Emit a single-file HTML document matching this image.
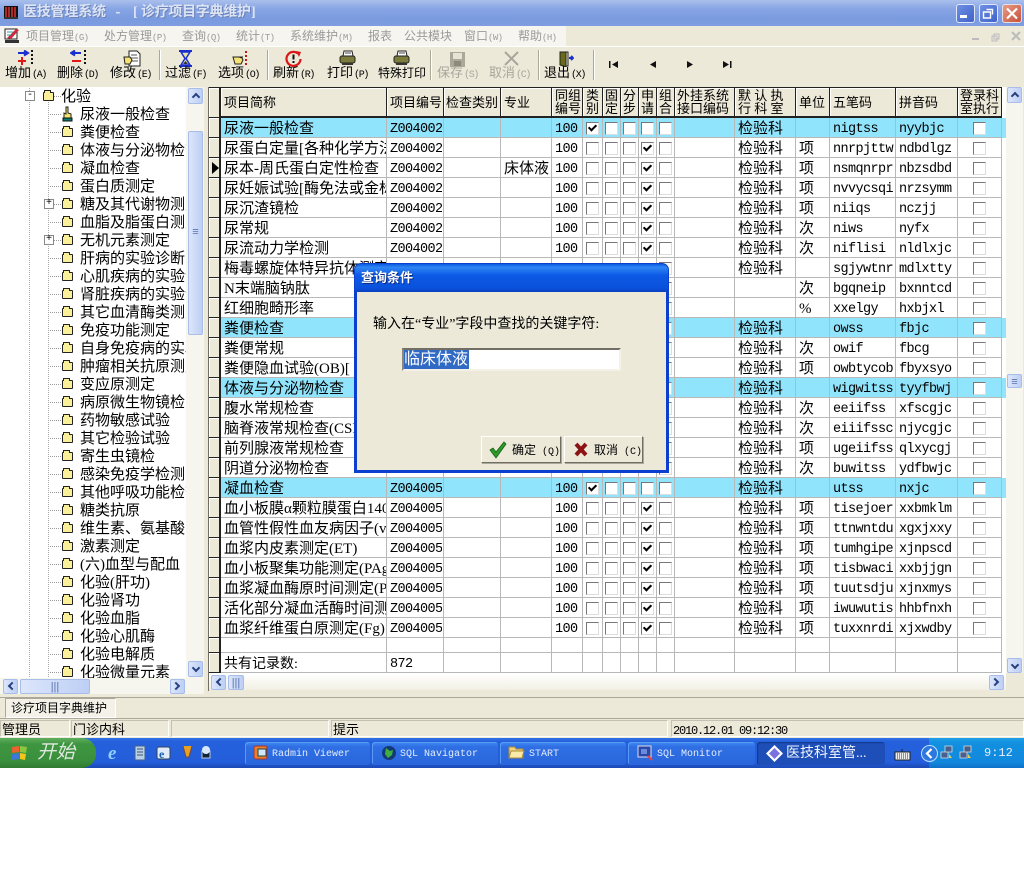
<!DOCTYPE html>
<html lang="zh"><head><meta charset="utf-8"><title>医技管理系统</title>
<style>
html,body{margin:0;padding:0;background:#fff}
#a{position:relative;width:1024px;height:877px;overflow:hidden;background:#fff;font-family:"Liberation Serif","Noto Sans CJK SC",sans-serif;color:#000}
#a div,#a span.p,#a svg{position:absolute}
.m{font-family:"Liberation Mono","Noto Sans CJK SC",monospace}
.l{font-size:13px;line-height:16px;white-space:nowrap;top:65px}
.l small{font-family:"Liberation Mono",monospace;font-size:10px;letter-spacing:-1.3px;margin-left:1px}
.g{color:#a8a69c}
.sep{top:50px;width:1px;height:30px;background:#aca899;border-right:1px solid #fff}
.mn{top:27px;font-size:12px;line-height:19px;color:#9a9a9a;white-space:nowrap}
.mn small{font-family:"Liberation Mono",monospace;font-size:9px;letter-spacing:-.6px}
#t{left:0;top:88px;width:186px;height:590px;overflow:hidden;background:#fff}
.r{position:relative!important;height:18px;line-height:18px;font-size:15px;padding-left:80px;white-space:nowrap}
.r:before{content:"";position:absolute;left:50px;top:8px;width:11px;border-top:1px dotted #999}
.f{position:absolute;left:62px;top:4px;width:9px;height:7px;background:#fbf09a;border:1px solid #222;border-radius:1px}
.f:before{content:"";position:absolute;left:0;top:-3px;width:5px;height:2px;background:#fbf09a;border:1px solid #222;border-bottom:0}
.pb{position:absolute;left:44px;top:3px;width:8px;height:8px;border:1px solid #888;background:#fff;font:10px/8px "Liberation Mono",monospace;text-align:center}
.sb{background:linear-gradient(90deg,#dce6fb,#bdcff5);border:1px solid #a9bdea;border-radius:2px;box-sizing:border-box;color:#5a72ae;font:11px/14px "Liberation Sans",sans-serif;text-align:center}
.sb.u:after,.sb.d:after,.sb.e:after,.sb.w:after{content:"";position:absolute;left:4px;width:4px;height:4px;border:solid #27407e;border-width:2px 0 0 2px}
.sb.u:after{top:5px;transform:rotate(45deg)}
.sb.d:after{top:3px;transform:rotate(225deg)}
.sb.w:after{left:5px;top:3px;transform:rotate(-45deg)}
.sb.e:after{left:2px;top:3px;transform:rotate(135deg)}
table{position:absolute;left:209px;top:87px;width:793px;table-layout:fixed;border-collapse:separate;border-spacing:0;background:#fff}
td{box-sizing:border-box;height:20px;padding:4px 0 0 3px;border-right:1px solid #b8b8b8;border-bottom:1px solid #b8b8b8;overflow:hidden;white-space:nowrap;font-size:15px;line-height:15px;vertical-align:top}
.h td{height:31px;background:#ece9d8;border-right:1px solid #222;border-bottom:2px solid #222;border-top:1px solid #222;font-size:13px;line-height:13px;padding:0 0 0 3px;vertical-align:middle;box-shadow:inset 1px 1px 0 #fff}
td.i,.h td.i{padding:0;background:#ece9d8;border-right:2px solid #222;border-bottom:1px solid #222;box-shadow:inset 1px 1px 0 #fff}
.cy td{background:#90e4fc}
.cy td.i{background:#ece9d8}
td.x{padding:0}
.x b{display:block;position:relative;width:11px;height:11px;margin:4px auto 0;border:1px solid;border-color:#777 #ddd #ddd #777;background:#fff}
.x b.k:after{content:"";position:absolute;left:3px;top:0;width:3px;height:6px;border:solid #000;border-width:0 2px 2px 0;transform:rotate(45deg)}
.z{display:block;width:52px;overflow:hidden}
td.m1{font-family:"Liberation Mono",monospace;font-size:13.5px;letter-spacing:-.6px;padding-left:3px}
.tb{top:742px;height:23px;border-radius:3px;background:linear-gradient(#3f8cf3,#2f6fe3 20%,#2a66dc);color:#e4ecff;font:10px/25px "Liberation Mono",monospace;white-space:nowrap;box-shadow:inset 1px 1px 0 #5a9bf5}
.st{top:720px;height:17px;border:1px solid;border-color:#c4c1b2 #fff #fff #c4c1b2;box-sizing:border-box;font-size:13px;line-height:17px;white-space:nowrap;padding-left:1px;overflow:hidden}
.btn{background:#ece9d8;border:1px solid;border-color:#fff #716f64 #716f64 #fff;box-sizing:border-box;box-shadow:1px 1px 0 #aca899;font-size:12px;line-height:27px;white-space:nowrap}
.btn small{font-family:"Liberation Mono",monospace;font-size:10px}
</style></head><body><div id="a">

<!-- title bar -->
<div style="left:0;top:0;width:1024px;height:26px;background:linear-gradient(#a9bfec,#87a4e4 35%,#7a9ae0 75%,#7f9de0)"></div>
<svg style="left:3px;top:4px" width="16" height="16" viewBox="0 0 16 16"><rect x="1" y="2" width="14" height="13" fill="#111"/><path d="M3 3v10M6 3v10M9 3v10M12 3v10" stroke="#d33" stroke-width="1.5"/><path d="M1 14h14" stroke="#333" stroke-width="2"/></svg>
<div style="left:23px;top:3px;font-size:14px;font-weight:bold;line-height:20px;color:#dce4f4;white-space:nowrap;text-shadow:1px 1px 0 #6a82b8;letter-spacing:-.2px">医技管理系统</div>
<div style="left:114px;top:3px;font:bold 13px/20px 'Liberation Mono',monospace;color:#dce4f4">-</div>
<div style="left:133px;top:3px;font-size:14px;font-weight:bold;line-height:20px;color:#dce4f4">[</div>
<div style="left:141px;top:3px;font-size:14px;font-weight:bold;line-height:20px;color:#dce4f4;white-space:nowrap;text-shadow:1px 1px 0 #6a82b8;letter-spacing:-.3px">诊疗项目字典维护</div>
<div style="left:251px;top:3px;font-size:14px;font-weight:bold;line-height:20px;color:#dce4f4">]</div>
<div style="left:956px;top:4px;width:19px;height:19px;box-sizing:border-box;border:1px solid #dfe7f8;border-radius:3px;background:linear-gradient(135deg,#6f90e4,#3f62c8)"></div>
<div style="left:960px;top:15px;width:7px;height:3px;background:#fff"></div>
<div style="left:979px;top:4px;width:19px;height:19px;box-sizing:border-box;border:1px solid #dfe7f8;border-radius:3px;background:linear-gradient(135deg,#6f90e4,#3f62c8)"></div>
<svg style="left:982px;top:7px" width="13" height="13" viewBox="0 0 13 13"><path d="M4.5 2.5h6v5M1.5 5h7v6h-7z" fill="none" stroke="#fff" stroke-width="1.4"/></svg>
<div style="left:1002px;top:4px;width:20px;height:19px;box-sizing:border-box;border:1px solid #e8e0e0;border-radius:3px;background:linear-gradient(135deg,#e89a86,#c8523a)"></div>
<svg style="left:1005px;top:7px" width="14" height="13" viewBox="0 0 14 13"><path d="M2 1.5l10 10M12 1.5l-10 10" stroke="#fff" stroke-width="2.2"/></svg>

<!-- menu -->
<div style="left:0;top:26px;width:1024px;height:21px;background:#ece9d8"></div>
<div style="left:0;top:26px;width:566px;height:20px;background:#f6f5ef"></div>
<div style="left:0;top:46px;width:1024px;height:1px;background:#fff"></div>
<svg style="left:4px;top:27px" width="17" height="18" viewBox="0 0 17 18"><rect x="1" y="2" width="12" height="10" fill="#fff" stroke="#222"/><path d="M3 11l9-9 3 1-8 9z" fill="#d02a3a"/><path d="M1 13h14v3H1z" fill="#333"/><path d="M3 5h6M3 8h4" stroke="#39a" /></svg>
<div class="mn" style="left:26px">项目管理<small>(G)</small></div>
<div class="mn" style="left:104px">处方管理<small>(P)</small></div>
<div class="mn" style="left:182px">查询<small>(Q)</small></div>
<div class="mn" style="left:236px">统计<small>(T)</small></div>
<div class="mn" style="left:290px">系统维护<small>(M)</small></div>
<div class="mn" style="left:368px">报表</div>
<div class="mn" style="left:404px">公共模块</div>
<div class="mn" style="left:464px">窗口<small>(W)</small></div>
<div class="mn" style="left:518px">帮助<small>(H)</small></div>
<svg style="left:970px;top:28px" width="54" height="16" viewBox="0 0 54 16"><path d="M2 11h7" stroke="#bbb" stroke-width="2"/><path d="M24 6h5v5h-5zM22 8h5v5h-5z" fill="none" stroke="#bbb"/><path d="M42 4l8 8M50 4l-8 8" stroke="#bbb" stroke-width="2"/></svg>

<!-- toolbar -->
<div style="left:0;top:47px;width:1024px;height:37px;background:#ece9d8;border-bottom:1px solid #aca899"></div>
<svg style="left:17px;top:50px" width="20" height="16" viewBox="0 0 20 16"><path d="M1 3h9M7 0.500l4 2.500-4 2.500" stroke="#1a2fd0" stroke-width="2" fill="#1a2fd0"/><path d="M1 11h8M5 7v8" stroke="#e01818" stroke-width="2"/><path d="M15 0v16" stroke="#111" stroke-width="2" stroke-dasharray="2 2"/></svg>
<svg style="left:70px;top:50px" width="20" height="16" viewBox="0 0 20 16"><path d="M11 3H2M5 0.500L1 3l4 2.500" stroke="#1a2fd0" stroke-width="2" fill="#1a2fd0"/><path d="M2 11h9" stroke="#e01818" stroke-width="2"/><path d="M15 0v16" stroke="#111" stroke-width="2" stroke-dasharray="2 2"/></svg>
<svg style="left:123px;top:50px" width="18" height="17" viewBox="0 0 18 17"><path d="M6 1h8l3 3v12H6z" fill="#fff" stroke="#222"/><path d="M8 5h6M8 8h7M8 11h7" stroke="#555"/><path d="M1 7h6l2 3-2 4H2z" fill="#f5e272" stroke="#222"/></svg>
<svg style="left:177px;top:50px" width="17" height="17" viewBox="0 0 17 17"><path d="M2 1h13M2 16h13" stroke="#1a2fd0" stroke-width="2"/><path d="M4 2h9L9 8.500l4 6.500H4l4-6.500z" fill="#e6e2a8" stroke="#1a2fd0" stroke-width="1.500"/><path d="M6 14h5l-2.500-3z" fill="#333"/></svg>
<svg style="left:232px;top:51px" width="16" height="15" viewBox="0 0 16 15"><path d="M1 6h6l3 1 1 2-2 4H3z" fill="#f5e272" stroke="#222"/><path d="M14 0v15" stroke="#c01818" stroke-width="2" stroke-dasharray="2 2"/><path d="M7 6h4" stroke="#222"/></svg>
<svg style="left:285px;top:50px" width="17" height="17" viewBox="0 0 17 17"><path d="M13 3.500A7 7 0 1 0 15.500 9" fill="none" stroke="#d81818" stroke-width="2.200"/><path d="M11 1l5 1-2 5z" fill="#d81818"/><path d="M8.500 4.500v5M8.500 11v2" stroke="#111" stroke-width="2"/></svg>
<svg style="left:339px;top:50px" width="17" height="16" viewBox="0 0 17 16"><path d="M5 1h8l1 5H4z" fill="#fff" stroke="#222"/><rect x="1" y="6" width="15" height="7" rx="2" fill="#7c7c3c" stroke="#222"/><path d="M3 13h11v2H3z" fill="#333"/><path d="M6 3h6" stroke="#444"/></svg>
<svg style="left:393px;top:50px" width="17" height="16" viewBox="0 0 17 16"><path d="M5 1h8l1 5H4z" fill="#fff" stroke="#222"/><rect x="1" y="6" width="15" height="7" rx="2" fill="#7c7c3c" stroke="#222"/><path d="M3 13h11v2H3z" fill="#333"/><path d="M6 3h6" stroke="#444"/></svg>
<svg style="left:450px;top:52px" width="16" height="15" viewBox="0 0 16 15"><rect width="15" height="15" fill="#aca899"/><rect x="3" y="1" width="9" height="6" fill="#e6e3d4"/><rect x="4" y="9" width="7" height="5" fill="#8d8a7c"/></svg>
<svg style="left:504px;top:51px" width="15" height="15" viewBox="0 0 15 15"><path d="M1 1l13 13M14 1L1 14" stroke="#a8a69c" stroke-width="2"/></svg>
<svg style="left:559px;top:51px" width="15" height="16" viewBox="0 0 15 16"><path d="M1 1h6v15l-6-2z" fill="#6a6a18" stroke="#222"/><path d="M7 1h2v14H7" fill="none" stroke="#222"/><path d="M10 7h3M12 5l2 2-2 2" stroke="#1a2fd0" stroke-width="2"/></svg>

<div class="l" style="left:5px">增加<small>(A)</small></div>
<div class="l" style="left:57px">删除<small>(D)</small></div>
<div class="l" style="left:110px">修改<small>(E)</small></div>
<div class="sep" style="left:159px"></div>
<div class="l" style="left:165px">过滤<small>(F)</small></div>
<div class="l" style="left:218px">选项<small>(O)</small></div>
<div class="sep" style="left:267px"></div>
<div class="l" style="left:273px">刷新<small>(R)</small></div>
<div class="l" style="left:327px">打印<small>(P)</small></div>
<div class="l" style="left:378px;font-size:12px">特殊打印</div>
<div class="sep" style="left:430px"></div>
<div class="l g" style="left:437px">保存<small>(S)</small></div>
<div class="l g" style="left:489px">取消<small>(C)</small></div>
<div class="sep" style="left:538px"></div>
<div class="l" style="left:544px">退出<small>(X)</small></div>
<div class="sep" style="left:593px"></div>
<svg style="left:608px;top:60px" width="126" height="10" viewBox="0 0 126 10"><path d="M1 1v7h1.500V1zM10 1v7L4 4.500z" fill="#111"/><path d="M48 1v7l-6-3.500z" fill="#111"/><path d="M79 1v7l6-3.500z" fill="#111"/><path d="M115 1v7l6-3.500zM122 1v7h1.500V1z" fill="#111"/></svg>

<!-- main background -->
<div style="left:0;top:84px;width:1024px;height:613px;background:#ece9d8"></div>

<!-- tree -->
<div style="left:0;top:87px;width:186px;height:1px;background:#fff"></div>
<div id="t">
<div style="left:29px;top:0;height:591px;border-left:1px dotted #aaa"></div>
<div style="left:48px;top:9px;height:582px;border-left:1px dotted #aaa"></div>
<div class="r" style="padding-left:61px"><i class="pb" style="left:25px">-</i><i class="f" style="left:43px"></i>化验</div>
<div class="r"><svg style="left:62px;top:0" width="11" height="16" viewBox="0 0 11 16"><path d="M4 1h2v6l3 1v4H2V7l2 1z" fill="#f6e46c" stroke="#222"/><rect x="1" y="12" width="9" height="3" fill="#0a7a70" stroke="#111"/></svg>尿液一般检查</div>
<div class="r"><i class="f"></i>粪便检查</div>
<div class="r"><i class="f"></i>体液与分泌物检查</div>
<div class="r"><i class="f"></i>凝血检查</div>
<div class="r"><i class="f"></i>蛋白质测定</div>
<div class="r"><i class="pb">+</i><i class="f"></i>糖及其代谢物测定</div>
<div class="r"><i class="f"></i>血脂及脂蛋白测定</div>
<div class="r"><i class="pb">+</i><i class="f"></i>无机元素测定</div>
<div class="r"><i class="f"></i>肝病的实验诊断</div>
<div class="r"><i class="f"></i>心肌疾病的实验诊断</div>
<div class="r"><i class="f"></i>肾脏疾病的实验诊断</div>
<div class="r"><i class="f"></i>其它血清酶类测定</div>
<div class="r"><i class="f"></i>免疫功能测定</div>
<div class="r"><i class="f"></i>自身免疫病的实验</div>
<div class="r"><i class="f"></i>肿瘤相关抗原测定</div>
<div class="r"><i class="f"></i>变应原测定</div>
<div class="r"><i class="f"></i>病原微生物镜检</div>
<div class="r"><i class="f"></i>药物敏感试验</div>
<div class="r"><i class="f"></i>其它检验试验</div>
<div class="r"><i class="f"></i>寄生虫镜检</div>
<div class="r"><i class="f"></i>感染免疫学检测</div>
<div class="r"><i class="f"></i>其他呼吸功能检查</div>
<div class="r"><i class="f"></i>糖类抗原</div>
<div class="r"><i class="f"></i>维生素、氨基酸</div>
<div class="r"><i class="f"></i>激素测定</div>
<div class="r"><i class="f"></i>(六)血型与配血</div>
<div class="r"><i class="f"></i>化验(肝功)</div>
<div class="r"><i class="f"></i>化验肾功</div>
<div class="r"><i class="f"></i>化验血脂</div>
<div class="r"><i class="f"></i>化验心肌酶</div>
<div class="r"><i class="f"></i>化验电解质</div>
<div class="r"><i class="f"></i>化验微量元素</div>
</div>
<div style="left:186px;top:87px;width:18px;height:591px;background:#f6f5ee"></div>
<div class="sb u" style="left:188px;top:88px;width:15px;height:16px"></div>
<div class="sb" style="left:188px;top:131px;width:15px;height:204px;line-height:200px">≡</div>
<div class="sb d" style="left:188px;top:661px;width:15px;height:16px"></div>
<div style="left:0;top:678px;width:204px;height:16px;background:#f6f5ee"></div>
<div class="sb w" style="left:3px;top:679px;width:15px;height:15px"></div>
<div class="sb" style="left:20px;top:679px;width:70px;height:15px">|||</div>
<div class="sb e" style="left:170px;top:679px;width:15px;height:15px"></div>

<!-- grid -->
<table>
<colgroup><col style="width:12px"><col style="width:166px"><col style="width:57px"><col style="width:57px"><col style="width:51px"><col style="width:31px"><col style="width:20px"><col style="width:18px"><col style="width:18px"><col style="width:18px"><col style="width:18px"><col style="width:60px"><col style="width:61px"><col style="width:34px"><col style="width:66px"><col style="width:62px"><col style="width:44px"></colgroup>
<tr class="h"><td class="i"></td><td>项目简称</td><td>项目编号</td><td style="padding-left:2px">检查类别</td><td>专业</td><td>同组<br>编号</td><td style="padding-left:3px">类<br>别</td><td style="padding-left:2px">固<br>定</td><td style="padding-left:2px">分<br>步</td><td style="padding-left:2px">申<br>请</td><td style="padding-left:2px">组<br>合</td><td style="padding-left:2px">外挂系统<br>接口编码</td><td>默 认 执<br>行 科 室</td><td>单位</td><td>五笔码</td><td>拼音码</td><td style="padding-left:2px">登录科<br>室执行</td></tr>
<tr class="cy"><td class="i"></td><td>尿液一般检查</td><td class="m1"><span class="z">Z004002</span></td><td></td><td></td><td class="m1">100</td><td class="x"><b class="k"></b></td><td class="x"><b></b></td><td class="x"><b></b></td><td class="x"><b></b></td><td class="x"><b></b></td><td></td><td>检验科</td><td></td><td class="m1">nigtss</td><td class="m1">nyybjc</td><td class="x"><b></b></td></tr>
<tr><td class="i"></td><td>尿蛋白定量[各种化学方法]</td><td class="m1"><span class="z">Z004002</span></td><td></td><td></td><td class="m1">100</td><td class="x"><b></b></td><td class="x"><b></b></td><td class="x"><b></b></td><td class="x"><b class="k"></b></td><td class="x"><b></b></td><td></td><td>检验科</td><td>项</td><td class="m1">nnrpjttw</td><td class="m1">ndbdlgz</td><td class="x"><b></b></td></tr>
<tr><td class="i"><svg style="position:static;display:block;margin:4px 0 0 3px" width="7" height="12" viewBox="0 0 7 12"><path d="M0 0v12l7-6z" fill="#000"/></svg></td><td>尿本-周氏蛋白定性检查</td><td class="m1"><span class="z">Z004002</span></td><td></td><td>床体液</td><td class="m1">100</td><td class="x"><b></b></td><td class="x"><b></b></td><td class="x"><b></b></td><td class="x"><b class="k"></b></td><td class="x"><b></b></td><td></td><td>检验科</td><td>项</td><td class="m1">nsmqnrpr</td><td class="m1">nbzsdbd</td><td class="x"><b></b></td></tr>
<tr><td class="i"></td><td>尿妊娠试验[酶免法或金标法]</td><td class="m1"><span class="z">Z004002</span></td><td></td><td></td><td class="m1">100</td><td class="x"><b></b></td><td class="x"><b></b></td><td class="x"><b></b></td><td class="x"><b class="k"></b></td><td class="x"><b></b></td><td></td><td>检验科</td><td>项</td><td class="m1">nvvycsqi</td><td class="m1">nrzsymm</td><td class="x"><b></b></td></tr>
<tr><td class="i"></td><td>尿沉渣镜检</td><td class="m1"><span class="z">Z004002</span></td><td></td><td></td><td class="m1">100</td><td class="x"><b></b></td><td class="x"><b></b></td><td class="x"><b></b></td><td class="x"><b class="k"></b></td><td class="x"><b></b></td><td></td><td>检验科</td><td>项</td><td class="m1">niiqs</td><td class="m1">nczjj</td><td class="x"><b></b></td></tr>
<tr><td class="i"></td><td>尿常规</td><td class="m1"><span class="z">Z004002</span></td><td></td><td></td><td class="m1">100</td><td class="x"><b></b></td><td class="x"><b></b></td><td class="x"><b></b></td><td class="x"><b class="k"></b></td><td class="x"><b></b></td><td></td><td>检验科</td><td>次</td><td class="m1">niws</td><td class="m1">nyfx</td><td class="x"><b></b></td></tr>
<tr><td class="i"></td><td>尿流动力学检测</td><td class="m1"><span class="z">Z004002</span></td><td></td><td></td><td class="m1">100</td><td class="x"><b></b></td><td class="x"><b></b></td><td class="x"><b></b></td><td class="x"><b class="k"></b></td><td class="x"><b></b></td><td></td><td>检验科</td><td>次</td><td class="m1">niflisi</td><td class="m1">nldlxjc</td><td class="x"><b></b></td></tr>
<tr><td class="i"></td><td>梅毒螺旋体特异抗体测定</td><td></td><td></td><td></td><td></td><td class="x"></td><td class="x"></td><td class="x"></td><td class="x"></td><td class="x"><b></b></td><td></td><td>检验科</td><td></td><td class="m1">sgjywtnr</td><td class="m1">mdlxtty</td><td class="x"><b></b></td></tr>
<tr><td class="i"></td><td>N末端脑钠肽</td><td></td><td></td><td></td><td></td><td class="x"></td><td class="x"></td><td class="x"></td><td class="x"></td><td class="x"><b></b></td><td></td><td></td><td>次</td><td class="m1">bgqneip</td><td class="m1">bxnntcd</td><td class="x"><b></b></td></tr>
<tr><td class="i"></td><td>红细胞畸形率</td><td></td><td></td><td></td><td></td><td class="x"></td><td class="x"></td><td class="x"></td><td class="x"></td><td class="x"><b></b></td><td></td><td></td><td>%</td><td class="m1">xxelgy</td><td class="m1">hxbjxl</td><td class="x"><b></b></td></tr>
<tr class="cy"><td class="i"></td><td>粪便检查</td><td></td><td></td><td></td><td></td><td class="x"></td><td class="x"></td><td class="x"></td><td class="x"></td><td class="x"><b></b></td><td></td><td>检验科</td><td></td><td class="m1">owss</td><td class="m1">fbjc</td><td class="x"><b></b></td></tr>
<tr><td class="i"></td><td>粪便常规</td><td></td><td></td><td></td><td></td><td class="x"></td><td class="x"></td><td class="x"></td><td class="x"></td><td class="x"><b></b></td><td></td><td>检验科</td><td>次</td><td class="m1">owif</td><td class="m1">fbcg</td><td class="x"><b></b></td></tr>
<tr><td class="i"></td><td>粪便隐血试验(OB)[</td><td></td><td></td><td></td><td></td><td class="x"></td><td class="x"></td><td class="x"></td><td class="x"></td><td class="x"><b></b></td><td></td><td>检验科</td><td>项</td><td class="m1">owbtycob</td><td class="m1">fbyxsyo</td><td class="x"><b></b></td></tr>
<tr class="cy"><td class="i"></td><td>体液与分泌物检查</td><td></td><td></td><td></td><td></td><td class="x"></td><td class="x"></td><td class="x"></td><td class="x"></td><td class="x"><b></b></td><td></td><td>检验科</td><td></td><td class="m1">wigwitss</td><td class="m1">tyyfbwj</td><td class="x"><b></b></td></tr>
<tr><td class="i"></td><td>腹水常规检查</td><td></td><td></td><td></td><td></td><td class="x"></td><td class="x"></td><td class="x"></td><td class="x"></td><td class="x"><b></b></td><td></td><td>检验科</td><td>次</td><td class="m1">eeiifss</td><td class="m1">xfscgjc</td><td class="x"><b></b></td></tr>
<tr><td class="i"></td><td>脑脊液常规检查(CSF)</td><td></td><td></td><td></td><td></td><td class="x"></td><td class="x"></td><td class="x"></td><td class="x"></td><td class="x"><b></b></td><td></td><td>检验科</td><td>次</td><td class="m1">eiiifssc</td><td class="m1">njycgjc</td><td class="x"><b></b></td></tr>
<tr><td class="i"></td><td>前列腺液常规检查</td><td></td><td></td><td></td><td></td><td class="x"></td><td class="x"></td><td class="x"></td><td class="x"></td><td class="x"><b></b></td><td></td><td>检验科</td><td>项</td><td class="m1">ugeiifss</td><td class="m1">qlxycgj</td><td class="x"><b></b></td></tr>
<tr><td class="i"></td><td>阴道分泌物检查</td><td></td><td></td><td></td><td></td><td class="x"></td><td class="x"></td><td class="x"></td><td class="x"></td><td class="x"><b></b></td><td></td><td>检验科</td><td>次</td><td class="m1">buwitss</td><td class="m1">ydfbwjc</td><td class="x"><b></b></td></tr>
<tr class="cy"><td class="i"></td><td>凝血检查</td><td class="m1"><span class="z">Z004005</span></td><td></td><td></td><td class="m1">100</td><td class="x"><b class="k"></b></td><td class="x"><b></b></td><td class="x"><b></b></td><td class="x"><b></b></td><td class="x"><b></b></td><td></td><td>检验科</td><td></td><td class="m1">utss</td><td class="m1">nxjc</td><td class="x"><b></b></td></tr>
<tr><td class="i"></td><td>血小板膜α颗粒膜蛋白140</td><td class="m1"><span class="z">Z004005</span></td><td></td><td></td><td class="m1">100</td><td class="x"><b></b></td><td class="x"><b></b></td><td class="x"><b></b></td><td class="x"><b class="k"></b></td><td class="x"><b></b></td><td></td><td>检验科</td><td>项</td><td class="m1">tisejoer</td><td class="m1">xxbmklm</td><td class="x"><b></b></td></tr>
<tr><td class="i"></td><td>血管性假性血友病因子(vWF)</td><td class="m1"><span class="z">Z004005</span></td><td></td><td></td><td class="m1">100</td><td class="x"><b></b></td><td class="x"><b></b></td><td class="x"><b></b></td><td class="x"><b class="k"></b></td><td class="x"><b></b></td><td></td><td>检验科</td><td>项</td><td class="m1">ttnwntdu</td><td class="m1">xgxjxxy</td><td class="x"><b></b></td></tr>
<tr><td class="i"></td><td>血浆内皮素测定(ET)</td><td class="m1"><span class="z">Z004005</span></td><td></td><td></td><td class="m1">100</td><td class="x"><b></b></td><td class="x"><b></b></td><td class="x"><b></b></td><td class="x"><b class="k"></b></td><td class="x"><b></b></td><td></td><td>检验科</td><td>项</td><td class="m1">tumhgipe</td><td class="m1">xjnpscd</td><td class="x"><b></b></td></tr>
<tr><td class="i"></td><td>血小板聚集功能测定(PAgT)</td><td class="m1"><span class="z">Z004005</span></td><td></td><td></td><td class="m1">100</td><td class="x"><b></b></td><td class="x"><b></b></td><td class="x"><b></b></td><td class="x"><b class="k"></b></td><td class="x"><b></b></td><td></td><td>检验科</td><td>项</td><td class="m1">tisbwaci</td><td class="m1">xxbjjgn</td><td class="x"><b></b></td></tr>
<tr><td class="i"></td><td>血浆凝血酶原时间测定(PT)</td><td class="m1"><span class="z">Z004005</span></td><td></td><td></td><td class="m1">100</td><td class="x"><b></b></td><td class="x"><b></b></td><td class="x"><b></b></td><td class="x"><b class="k"></b></td><td class="x"><b></b></td><td></td><td>检验科</td><td>项</td><td class="m1">tuutsdju</td><td class="m1">xjnxmys</td><td class="x"><b></b></td></tr>
<tr><td class="i"></td><td>活化部分凝血活酶时间测定</td><td class="m1"><span class="z">Z004005</span></td><td></td><td></td><td class="m1">100</td><td class="x"><b></b></td><td class="x"><b></b></td><td class="x"><b></b></td><td class="x"><b class="k"></b></td><td class="x"><b></b></td><td></td><td>检验科</td><td>项</td><td class="m1">iwuwutis</td><td class="m1">hhbfnxh</td><td class="x"><b></b></td></tr>
<tr><td class="i"></td><td>血浆纤维蛋白原测定(Fg)</td><td class="m1"><span class="z">Z004005</span></td><td></td><td></td><td class="m1">100</td><td class="x"><b></b></td><td class="x"><b></b></td><td class="x"><b></b></td><td class="x"><b class="k"></b></td><td class="x"><b></b></td><td></td><td>检验科</td><td>项</td><td class="m1">tuxxnrdi</td><td class="m1">xjxwdby</td><td class="x"><b></b></td></tr>
<tr><td class="i" style="height:15px"></td><td style="height:15px"></td><td style="height:15px"></td><td style="height:15px"></td><td style="height:15px"></td><td style="height:15px"></td><td style="height:15px"></td><td style="height:15px"></td><td style="height:15px"></td><td style="height:15px"></td><td style="height:15px"></td><td style="height:15px"></td><td style="height:15px"></td><td style="height:15px"></td><td style="height:15px"></td><td style="height:15px"></td><td style="height:15px"></td></tr>
<tr><td class="i"></td><td style="font-size:14px">共有记录数:</td><td class="m1">872</td><td></td><td></td><td></td><td></td><td></td><td></td><td></td><td></td><td></td><td></td><td></td><td></td><td></td><td></td></tr>
</table>
<div style="left:208px;top:87px;width:1px;height:604px;background:#716f64"></div>
<div style="left:1002px;top:87px;width:4px;height:586px;background:#fff"></div>
<div style="left:1002px;top:118px;width:4px;height:20px;background:#90e4fc"></div>
<div style="left:1002px;top:318px;width:4px;height:20px;background:#90e4fc"></div>
<div style="left:1002px;top:378px;width:4px;height:20px;background:#90e4fc"></div>
<div style="left:1002px;top:478px;width:4px;height:20px;background:#90e4fc"></div>
<div style="left:1006px;top:87px;width:17px;height:586px;background:#f6f5ee"></div>
<div class="sb u" style="left:1007px;top:87px;width:15px;height:16px"></div>
<div class="sb" style="left:1007px;top:374px;width:15px;height:14px">≡</div>
<div class="sb d" style="left:1007px;top:658px;width:15px;height:15px"></div>
<div style="left:209px;top:673px;width:797px;height:17px;background:linear-gradient(#fff,#f2f0e4)"></div>
<div class="sb w" style="left:211px;top:675px;width:15px;height:15px"></div>
<div class="sb" style="left:228px;top:675px;width:16px;height:15px">|||</div>
<div class="sb e" style="left:989px;top:675px;width:15px;height:15px"></div>

<!-- tab bar -->
<div style="left:0;top:697px;width:1024px;height:1px;background:#aca899"></div>
<div style="left:0;top:698px;width:1024px;height:40px;background:#ece9d8"></div>
<div style="left:0;top:718px;width:1024px;height:1px;background:#aca899"></div>
<div style="left:5px;top:698px;width:111px;height:20px;box-sizing:border-box;border:1px solid;border-color:#aca899 #fff #fff #aca899;background:#f4f2e8;font-size:12px;line-height:18px;padding-left:5px;white-space:nowrap">诊疗项目字典维护</div>

<!-- status -->
<div class="st" style="left:0;width:70px">管理员</div>
<div class="st" style="left:71px;width:98px">门诊内科</div>
<div class="st" style="left:171px;width:158px"></div>
<div class="st" style="left:331px;width:337px">提示</div>
<div class="st" style="left:671px;width:353px"><span class="m" style="font-size:12px;letter-spacing:-1.2px">2010.12.01 09:12:30</span></div>

<!-- taskbar -->
<div style="left:0;top:738px;width:1024px;height:30px;background:linear-gradient(#2f72e6,#2560dc 12%,#245edb 80%,#1c48b4)"></div>
<div style="left:0;top:738px;width:96px;height:30px;border-radius:0 14px 14px 0;background:linear-gradient(#5fae5f,#3f9640 20%,#3a8f3c 75%,#2f7a30)"></div>
<svg style="left:11px;top:745px" width="18" height="16" viewBox="0 0 18 16"><path d="M1 2l7-1v6l-7 1z" fill="#e8642c"/><path d="M9 1l7 1-1 6-6-1z" fill="#8cc63f"/><path d="M1 9l7-1v6l-7 1z" fill="#3c78d8"/><path d="M9 8l6 1-1 6-5-1z" fill="#f5c518"/></svg>
<div style="left:37px;top:740px;font-size:19px;font-style:italic;line-height:26px;color:#dfe8df;white-space:nowrap">开始</div>
<svg style="left:108px;top:744px" width="110" height="18" viewBox="0 0 110 18"><text x="0" y="15" font-family="Liberation Serif,serif" font-style="italic" font-weight="bold" font-size="19" fill="#8fd0ff">e</text><rect x="27" y="2" width="10" height="14" fill="#b8cfe8" stroke="#44618f"/><path d="M29 5h6M29 8h6M29 11h6" stroke="#456"/><rect x="49" y="3" width="13" height="12" rx="2" fill="#dfeaff" stroke="#345"/><text x="51" y="14" font-family="Liberation Serif,serif" font-weight="bold" font-size="12" fill="#1a5fb0">e</text><path d="M75 2l3 11h3l3-11" fill="#e8a020" stroke="#744"/><path d="M94 7h8v7h-8z" fill="#123" stroke="#bcd"/><circle cx="98" cy="6" r="4" fill="#d8e8ff"/></svg>

<div class="tb" style="left:245px;width:125px;padding-left:27px;box-sizing:border-box">Radmin Viewer</div>
<svg style="left:253px;top:745px" width="16" height="16" viewBox="0 0 16 16"><rect x="1" y="1" width="13" height="13" rx="2" fill="#e8812c" stroke="#a33"/><rect x="5" y="4" width="8" height="7" fill="#cfe8f8" stroke="#244"/></svg>
<div class="tb" style="left:372px;width:126px;padding-left:28px;box-sizing:border-box">SQL Navigator</div>
<svg style="left:381px;top:745px" width="16" height="16" viewBox="0 0 16 16"><circle cx="8" cy="8" r="7" fill="#123a7a"/><path d="M5 3l4 3 3-1-1 5-4 3-3-4z" fill="#3fae3f"/></svg>
<div class="tb" style="left:500px;width:126px;padding-left:29px;box-sizing:border-box">START</div>
<svg style="left:508px;top:745px" width="17" height="15" viewBox="0 0 17 15"><path d="M1 2h6l1 2h7v9H1z" fill="#f2d27a" stroke="#a88a3a"/><path d="M1 13l2-7h13l-2 7z" fill="#fbe9a8" stroke="#a88a3a"/></svg>
<div class="tb" style="left:628px;width:127px;padding-left:29px;box-sizing:border-box">SQL Monitor</div>
<svg style="left:637px;top:745px" width="16" height="16" viewBox="0 0 16 16"><rect x="1" y="1" width="13" height="11" fill="#2a48a8" stroke="#dde"/><path d="M4 4h6v5H4z" fill="#6a8ae0"/><path d="M11 11l4 4" stroke="#e44" stroke-width="2"/></svg>
<div class="tb" style="left:757px;width:128px;padding-left:29px;box-sizing:border-box;background:#1e4fb8;box-shadow:inset 1px 1px 1px #123a88;font:14px/23px 'Liberation Serif','Noto Sans CJK SC',sans-serif;color:#f0f4ff;letter-spacing:0">医技科室管...</div>
<svg style="left:766px;top:745px" width="17" height="17" viewBox="0 0 17 17"><path d="M8.500 0L17 8.500 8.500 17 0 8.500z" fill="#fff"/><path d="M8.500 3l5.500 5.500-5.500 5.500L3 8.500z" fill="#7a70e0"/></svg>
<svg style="left:894px;top:748px" width="17" height="13" viewBox="0 0 17 13"><rect x="1" y="4" width="15" height="8" fill="#eee" stroke="#222"/><path d="M3 6h11M3 8h11M3 10h11" stroke="#333" stroke-dasharray="1 1"/><path d="M8 4V1" stroke="#222"/></svg>
<div style="left:929px;top:738px;width:95px;height:30px;background:linear-gradient(#1fa0ea,#1390e0 15%,#1188dc 80%,#0e70c8)"></div>
<div style="left:921px;top:745px;width:15px;height:15px;border:1px solid #bfe0ff;border-radius:50%;background:#2c78e0"></div>
<svg style="left:925px;top:748px" width="9" height="11" viewBox="0 0 9 11"><path d="M6.500 1L2 5.500 6.500 10" fill="none" stroke="#fff" stroke-width="2.200"/></svg>
<svg style="left:940px;top:745px" width="34" height="17" viewBox="0 0 34 17"><path d="M5 1h7v6H5zM1 7h7v6H1z" fill="#47608e" stroke="#ddd" stroke-width=".8"/><path d="M9 9l3 4h-3" fill="#e8d060"/><path d="M24 1h7v6h-7zM20 7h7v6h-7z" fill="#47608e" stroke="#ddd" stroke-width=".8"/><path d="M28 9l3 4h-3" fill="#e8d060"/></svg>
<div class="m" style="left:984px;top:744px;font-size:12px;line-height:18px;color:#e4f0ff">9:12</div>

<!-- dialog -->
<div style="left:354px;top:263px;width:315px;height:210px;border-radius:7px 7px 0 0;background:#0a3fcf"></div>
<div style="left:355px;top:264px;width:313px;height:28px;border-radius:6px 6px 0 0;background:linear-gradient(#0a5be0,#2f86f4 12%,#0d5ae6 40%,#0a52dc 85%,#0a40c0)"></div>
<div style="left:361px;top:268px;font-size:13px;font-weight:bold;line-height:20px;color:#fff;white-space:nowrap;text-shadow:1px 1px 0 #0a2a80">查询条件</div>
<div style="left:357px;top:292px;width:309px;height:178px;background:#ece9d8"></div>
<div style="left:373px;top:315px;font-size:14px;line-height:20px;white-space:nowrap">输入在“专业”字段中查找的关键字符:</div>
<div style="left:402px;top:348px;width:219px;height:23px;box-sizing:border-box;background:#fff;border:2px solid;border-color:#716f64 #f4f2e8 #f4f2e8 #8a887c"></div>
<div style="left:404px;top:350px;width:65px;height:19px;background:#316ac5;color:#fff;font-size:16px;line-height:19px;white-space:nowrap;overflow:hidden">临床体液</div>
<div class="btn" style="left:481px;top:436px;width:80px;height:27px;padding-left:30px">确定<small> (Q)</small></div>
<svg style="left:488px;top:441px" width="19" height="18" viewBox="0 0 19 18"><path d="M2 9l3-2 3 4 8-10 2 2-10 14z" fill="#2c9a2c" stroke="#136013" stroke-width=".8"/></svg>
<div class="btn" style="left:564px;top:436px;width:79px;height:27px;padding-left:29px">取消<small> (C)</small></div>
<svg style="left:574px;top:442px" width="14" height="15" viewBox="0 0 14 15"><path d="M2 2l10 11M12 2L2 13" stroke="#8c1414" stroke-width="4"/></svg>

</div></body></html>
